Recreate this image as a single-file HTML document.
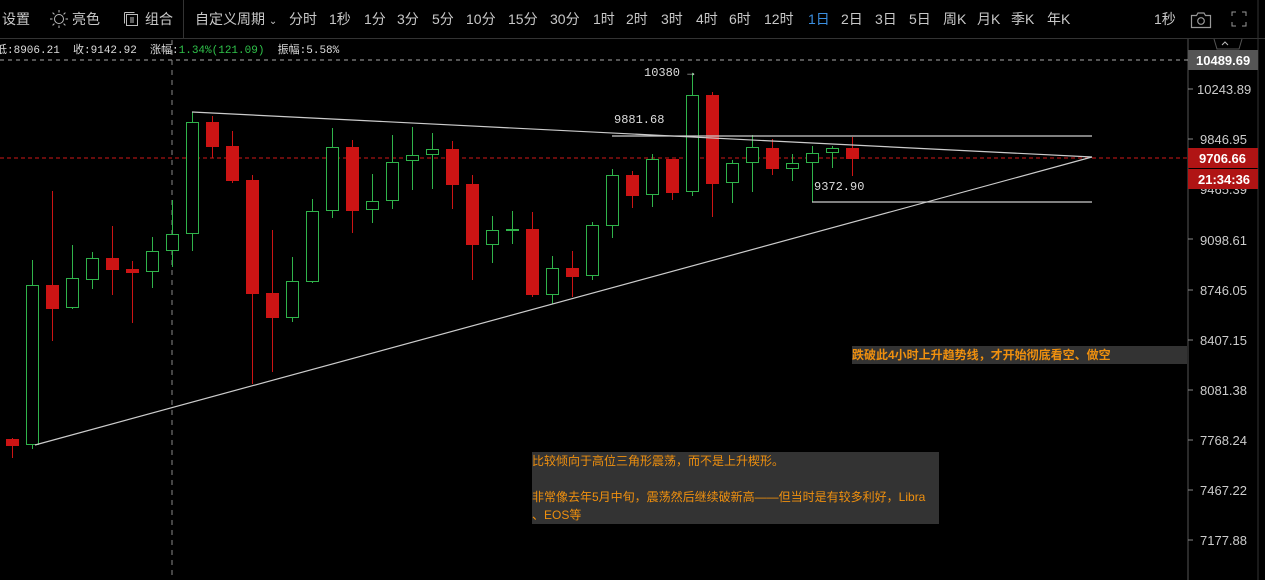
<!DOCTYPE html>
<html><head><meta charset="utf-8"><style>
body{margin:0;width:1265px;height:580px;background:#000;overflow:hidden;position:relative;font-family:"Liberation Sans","Noto Sans CJK SC",sans-serif;color:#c8c8c8}
.t{position:absolute;top:10px;font-size:14px;line-height:18px;white-space:nowrap}
.note{position:absolute;background:#333;color:#f0900e;font-size:12px;line-height:18px;font-family:"Liberation Sans","Noto Sans CJK SC",sans-serif}
</style></head><body>
<div style="position:absolute;left:0;top:38px;width:1265px;height:1px;background:#333"></div>
<div style="position:absolute;left:183px;top:0;width:1px;height:38px;background:#333"></div>
<div class="t" style="left:2px">设置</div>
<svg style="position:absolute;left:50px;top:10px" width="18" height="18" viewBox="0 0 18 18" fill="none" stroke="#bbb" stroke-width="1"><circle cx="9" cy="9" r="4.5"/><path d="M9 0v2.5M9 15.5V18M0 9h2.5M15.5 9H18M2.6 2.6l1.8 1.8M13.6 13.6l1.8 1.8M2.6 15.4l1.8-1.8M13.6 4.4l1.8-1.8"/></svg>
<div class="t" style="left:72px">亮色</div>
<svg style="position:absolute;left:123px;top:11px" width="16" height="16" viewBox="0 0 16 16" fill="none" stroke="#bbb" stroke-width="1"><path d="M1.5 1.5h10M1.5 1.5v11"/><rect x="3.5" y="3.5" width="11" height="11"/><path d="M8 6v6M10 6v6"/></svg>
<div class="t" style="left:145px">组合</div>
<div class="t" style="left:195px">自定义周期 <span style="font-size:10px">⌄</span></div>
<div class="t" style="left:289px">分时</div><div class="t" style="left:329px">1秒</div><div class="t" style="left:364px">1分</div><div class="t" style="left:397px">3分</div><div class="t" style="left:432px">5分</div><div class="t" style="left:466px">10分</div><div class="t" style="left:508px">15分</div><div class="t" style="left:550px">30分</div><div class="t" style="left:593px">1时</div><div class="t" style="left:626px">2时</div><div class="t" style="left:661px">3时</div><div class="t" style="left:696px">4时</div><div class="t" style="left:729px">6时</div><div class="t" style="left:764px">12时</div><div class="t" style="left:808px;color:#3b8fe0">1日</div><div class="t" style="left:841px">2日</div><div class="t" style="left:875px">3日</div><div class="t" style="left:909px">5日</div><div class="t" style="left:943px">周K</div><div class="t" style="left:977px">月K</div><div class="t" style="left:1011px">季K</div><div class="t" style="left:1047px">年K</div>
<div class="t" style="left:1154px">1秒</div>
<svg style="position:absolute;left:1190px;top:11px" width="22" height="18" viewBox="0 0 22 18" fill="none" stroke="#999" stroke-width="1.2"><path d="M1.5 4.5h5l1.5-2.5h6l1.5 2.5h5v12h-19z"/><circle cx="11" cy="10" r="3.3"/></svg>
<svg style="position:absolute;left:1231px;top:11px" width="16" height="16" viewBox="0 0 16 16" fill="none" stroke="#999" stroke-width="1"><path d="M1 5V1h4M11 1h4v4M15 11v4h-4M5 15H1v-4"/></svg>
<div style="position:absolute;left:-4px;top:41px;font:11px 'Liberation Mono','Noto Sans CJK SC',monospace;color:#ddd;white-space:pre">低:8906.21  收:9142.92  涨幅:<span style="color:#2fc24a">1.34%(121.09)</span>  振幅:5.58%</div>

<svg style="position:absolute;left:0;top:0" width="1265" height="580">
<line x1="1188" y1="39" x2="1188" y2="580" stroke="#555"/>
<line x1="1258" y1="0" x2="1258" y2="580" stroke="#333"/>
<path d="M1214 39l3 10h22l3-10" fill="none" stroke="#555"/>
<path d="M1222 45l3-3 3 3" fill="none" stroke="#bbb"/>
<line x1="0" y1="60" x2="1188" y2="60" stroke="#aaa" stroke-dasharray="4,4"/>
<line x1="172" y1="40" x2="172" y2="580" stroke="#888" stroke-dasharray="5,5"/>
<line x1="0" y1="158" x2="1188" y2="158" stroke="#d01818" stroke-dasharray="4,3"/>
<g stroke-width="1" shape-rendering="crispEdges" id="c"></g>
<g fill="none" stroke="#ccc" stroke-width="1.2">
<line x1="192" y1="112" x2="1092" y2="157"/>
<line x1="35" y1="445" x2="1092" y2="157"/>
<line x1="612" y1="136" x2="1092" y2="136"/>
<line x1="812" y1="202" x2="1092" y2="202"/>
</g>
<g font-family="Liberation Mono,monospace" font-size="12" fill="#ddd">
<text x="644" y="76">10380 →</text>
<text x="614" y="123">9881.68</text>
<text x="814" y="190">9372.90</text>
</g>
<rect x="1188" y="50" width="70" height="20" fill="#555"/>
<rect x="1188" y="148" width="70" height="20" fill="#b01414"/>
<g font-family="Liberation Sans,sans-serif" font-size="13" fill="#ccc">
<text x="1197" y="94">10243.89</text><text x="1200" y="144">9846.95</text><text x="1200" y="194">9465.39</text><text x="1200" y="245">9098.61</text><text x="1200" y="295">8746.05</text><text x="1200" y="345">8407.15</text><text x="1200" y="395">8081.38</text><text x="1200" y="445">7768.24</text><text x="1200" y="495">7467.22</text><text x="1200" y="545">7177.88</text>
</g>
<rect x="1188" y="169" width="70" height="20" fill="#b01414"/>
<g font-family="Liberation Sans,sans-serif" font-size="13" fill="#fff" font-weight="bold">
<text x="1196" y="65">10489.69</text><text x="1199" y="163">9706.66</text><text x="1198" y="184">21:34:36</text>
</g>
<g stroke="#888"><path d="M1188 89h5M1188 139h5M1188 239h5M1188 290h5M1188 340h5M1188 390h5M1188 440h5M1188 490h5M1188 540h5"/></g>
</svg>
<div class="note" style="left:852px;top:346px;width:335px;height:18px;font-weight:bold">跌破此4小时上升趋势线，才开始彻底看空、做空</div>
<div class="note" style="left:532px;top:452px;width:407px;height:72px">比较倾向于高位三角形震荡，而不是上升楔形。<br><br>非常像去年5月中旬，震荡然后继续破新高——但当时是有较多利好，Libra<br>、EOS等</div>
<script>
var d=[[12,'r',439,446,438,458],[32,'g',285,445,260,449],[52,'r',285,309,191,341],[72,'g',278,308,245,309],[92,'g',258,280,252,289],[112,'r',258,270,226,295],[132,'r',269,273,261,323],[152,'g',251,272,237,288],[172,'g',234,251,200,267],[192,'g',122,234,112,251],[212,'r',122,147,116,158],[232,'r',146,181,131,183],[252,'r',180,294,175,384],[272,'r',293,318,230,372],[292,'g',281,318,257,322],[312,'g',211,282,199,283],[332,'g',147,211,128,218],[352,'r',147,211,140,233],[372,'g',201,210,174,223],[392,'g',162,201,135,209],[412,'g',155,161,127,190],[432,'g',149,155,133,189],[452,'r',149,185,141,209],[472,'r',184,245,175,280],[492,'g',230,245,216,263],[512,'g',229,231,211,244],[532,'r',229,295,212,297],[552,'g',268,295,256,304],[572,'r',268,277,251,297],[592,'g',225,276,222,280],[612,'g',175,226,169,238],[632,'r',175,196,171,208],[652,'g',159,195,154,207],[672,'r',159,193,159,200],[692,'g',95,192,73,196],[712,'r',95,184,92,217],[732,'g',163,183,160,203],[752,'g',147,163,135,192],[772,'r',148,169,139,175],[792,'g',163,169,154,181],[812,'g',153,163,146,202],[832,'g',148,153,146,168],[852,'r',148,159,137,176]];
var s='';d.forEach(function(c){var col=c[1]=='g'?'#2fb34a':'#cc1414';s+='<line x1="'+(c[0]+.5)+'" x2="'+(c[0]+.5)+'" y1="'+c[4]+'" y2="'+c[5]+'" stroke="'+col+'"/>';if(c[1]=='g')s+='<rect x="'+(c[0]-5.5)+'" y="'+(c[2]+.5)+'" width="12" height="'+Math.max(1,c[3]-c[2]-1)+'" fill="#000" stroke="'+col+'"/>';else s+='<rect x="'+(c[0]-6)+'" y="'+c[2]+'" width="13" height="'+Math.max(2,c[3]-c[2])+'" fill="'+col+'"/>';});
document.getElementById('c').innerHTML=s;
</script>
</body></html>
